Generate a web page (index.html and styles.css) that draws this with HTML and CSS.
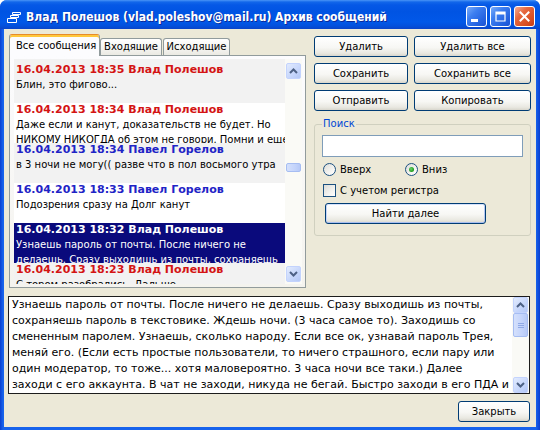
FILE: index.html
```html
<!DOCTYPE html>
<html lang="ru">
<head>
<meta charset="utf-8">
<title>Архив сообщений</title>
<link rel="stylesheet" href="styles.css">
</head>
<body>
<div class="window">
  <div class="titlebar">
    <svg class="app-icon" width="14" height="11" viewBox="0 0 14 11">
      <g fill="none" stroke="#fff" stroke-width="1">
        <path d="M5.5 0.5h8v2h-8z"/>
        <path d="M3.5 3.5h8v2h-8z"/>
        <path d="M0.5 6.5h9v4h-9z"/>
      </g>
    </svg>
    <span class="title">Влад Полешов (vlad.poleshov@mail.ru) Архив сообщений</span>
    <div class="caption">
      <div class="cbtn"><span class="min-glyph"></span></div>
      <div class="cbtn">
        <svg width="11" height="11" viewBox="0 0 11 11"><path d="M1 1h9v9h-9z" fill="none" stroke="#fff" stroke-width="1.2"/><path d="M1 1h9v2.5h-9z" fill="#fff"/></svg>
      </div>
      <div class="cbtn close">
        <svg width="11" height="11" viewBox="0 0 11 11"><path d="M1.5 1.5l8 8M9.5 1.5l-8 8" stroke="#fff" stroke-width="2" stroke-linecap="square"/></svg>
      </div>
    </div>
  </div>

  <div class="body">
    <div class="top">
      <div class="left">
        <div class="tabs">
          <div class="tab active">Все сообщения</div>
          <div class="tab t2">Входящие</div>
          <div class="tab t3">Исходящие</div>
        </div>
        <div class="panel">
          <div class="list">
            <div class="msgs">
              <div class="msg gray">
                <div class="hd red">16.04.2013 18:35 Влад Полешов</div>
                <div class="tx">Блин, это фигово...</div>
              </div>
              <div class="msg white">
                <div class="hd red">16.04.2013 18:34 Влад Полешов</div>
                <div class="tx">Даже если и канут, доказательств не будет. Но</div>
                <div class="tx">НИКОМУ НИКОГДА об этом не говори. Помни и еще</div>
              </div>
              <div class="msg gray">
                <div class="hd blue">16.04.2013 18:34 Павел Горелов</div>
                <div class="tx">в 3 ночи не могу(( разве что в пол восьмого утра</div>
              </div>
              <div class="msg white">
                <div class="hd blue">16.04.2013 18:33 Павел Горелов</div>
                <div class="tx">Подозрения сразу на Долг канут</div>
              </div>
              <div class="msg selected">
                <div class="hd">16.04.2013 18:32 Влад Полешов</div>
                <div class="tx">Узнаешь пароль от почты. После ничего не</div>
                <div class="tx">делаешь. Сразу выходишь из почты, сохраняешь</div>
              </div>
              <div class="msg gray">
                <div class="hd red">16.04.2013 18:23 Влад Полешов</div>
                <div class="tx">С тором разобрались. Дальше</div>
              </div>
            </div>
            <div class="vs list-vs">
              <div class="arrow"><svg width="9" height="6" viewBox="0 0 9 6"><path d="M1 5l3.5-3.5L8 5" fill="none" stroke="#4d6185" stroke-width="2"/></svg></div>
              <div class="track"><div class="thumb"></div></div>
              <div class="arrow"><svg width="9" height="6" viewBox="0 0 9 6"><path d="M1 1l3.5 3.5L8 1" fill="none" stroke="#4d6185" stroke-width="2"/></svg></div>
            </div>
          </div>
        </div>
      </div>

      <div class="right">
        <div class="btns">
          <button class="btn">Удалить</button>
          <button class="btn">Удалить все</button>
          <button class="btn">Сохранить</button>
          <button class="btn">Сохранить все</button>
          <button class="btn">Отправить</button>
          <button class="btn">Копировать</button>
        </div>
        <fieldset class="search">
          <legend>Поиск</legend>
          <div class="input"></div>
          <div class="radios">
            <div class="opt first"><span class="radio"></span><span class="lbl">Вверх</span></div>
            <div class="opt"><span class="radio checked"></span><span class="lbl">Вниз</span></div>
          </div>
          <div class="check-row"><span class="checkbox"></span><span class="lbl">С учетом регистра</span></div>
          <button class="btn find">Найти далее</button>
        </fieldset>
      </div>
    </div>

    <div class="textbox">
      <div class="text">
        <div>Узнаешь пароль от почты. После ничего не делаешь. Сразу выходишь из почты,</div>
        <div>сохраняешь пароль в текстовике. Ждешь ночи. (3 часа самое то). Заходишь со</div>
        <div>смененным паролем. Узнаешь, сколько народу. Если все ок, узнавай пароль Трея,</div>
        <div>меняй его. (Если есть простые пользователи, то ничего страшного, если пару или</div>
        <div>один модератор, то тоже... хотя маловероятно. 3 часа ночи все таки.) Далее</div>
        <div>заходи с его аккаунта. В чат не заходи, никуда не бегай. Быстро заходи в его ПДА и</div>
      </div>
      <div class="vs text-vs">
        <div class="arrow"><svg width="9" height="6" viewBox="0 0 9 6"><path d="M1 5l3.5-3.5L8 5" fill="none" stroke="#4d6185" stroke-width="2"/></svg></div>
        <div class="track"><div class="thumb big"><span></span><span></span><span></span></div></div>
        <div class="arrow"><svg width="9" height="6" viewBox="0 0 9 6"><path d="M1 1l3.5 3.5L8 1" fill="none" stroke="#4d6185" stroke-width="2"/></svg></div>
      </div>
    </div>

    <div class="footer">
      <button class="btn close-btn">Закрыть</button>
    </div>
  </div>
</div>
</body>
</html>
```
FILE: styles.css
```css
* { box-sizing: border-box; }
html, body { margin: 0; padding: 0; background: #ffffff; }

.window {
  width: 540px;
  height: 430px;
  display: flex;
  flex-direction: column;
  background: linear-gradient(90deg, #0a3fd0 0, #1763ec 3px, #1763ec 536px, #0a3fd0 540px);
  border-radius: 7px 7px 0 0;
  overflow: hidden;
  font-family: "DejaVu Sans", sans-serif;
  font-size: 10px;
  color: #000;
}

/* title bar */
.titlebar {
  flex: none;
  height: 29px;
  display: flex;
  align-items: center;
  padding: 4px 5px 0 7px;
  background: linear-gradient(180deg, #4a95f7 0, #1267ea 2px, #0558e6 5px, #0054e3 12px, #0158e8 22px, #0350dc 26px, #0a44c8 29px);
}
.app-icon { flex: none; margin-top: 1px; }
.title {
  margin-left: 5px;
  color: #fff;
  font-family: "DejaVu Sans Condensed", "DejaVu Sans", sans-serif;
  font-stretch: condensed;
  font-weight: bold;
  font-size: 12px;
  white-space: nowrap;
  text-shadow: 1px 1px 0 #0b2a9a;
}
.caption { margin-left: auto; display: flex; gap: 3px; }
.cbtn {
  width: 21px;
  height: 21px;
  border: 1px solid #fff;
  border-radius: 3px;
  background: linear-gradient(135deg, #79acf9 0, #3d7ef0 35%, #2462e0 75%, #1b52d3 100%);
  display: flex;
  align-items: center;
  justify-content: center;
  position: relative;
}
.cbtn.close { background: linear-gradient(135deg, #f3ad95 0, #e6683f 35%, #d94e22 75%, #c43c14 100%); }
.min-glyph { width: 7px; height: 3px; background: #fff; margin: 8px 5px 0 0; }

/* body */
.body {
  flex: 1;
  margin: 0 4px 4px;
  background: #ece9d8;
  padding: 5px 5px 5px 4px;
  display: flex;
  flex-direction: column;
}
.top { display: flex; gap: 8px; margin-left: 1px; height: 254px; }
.left { width: 297px; display: flex; flex-direction: column; }

.tabs { display: flex; align-items: flex-end; height: 21px; }
.tab {
  height: 17px;
  border: 1px solid #919b9c;
  border-bottom: none;
  border-radius: 3px 3px 0 0;
  background: linear-gradient(180deg, #ffffff 0, #f6f6f3 50%, #ebeae3 100%);
  text-align: center;
  line-height: 16px;
  white-space: nowrap;
}
.tab.active {
  width: 91px;
  height: 22px;
  margin-bottom: -1px;
  position: relative;
  z-index: 2;
  background: #fcfcfe;
  border-top: 1px solid #e68b2c;
  box-shadow: inset 0 2px 0 #ffc83c;
  text-align: left;
  padding-left: 6px;
  line-height: 21px;
}
.tab.t2 { width: 62px; }
.tab.t3 { width: 67px; margin-left: 1px; }

.panel {
  height: 233px;
  border: 1px solid #919b9c;
  background: linear-gradient(180deg, #fcfcfe 0, #f4f3ee 100%);
  padding: 3px 3px 3px 4px;
}
.list { height: 100%; display: flex; background: #f2f2f2; }
.msgs { flex: 1; overflow: hidden; padding-top: 4px; background: #f2f2f2; }
.msg { height: 40px; overflow: hidden; padding-left: 2px; white-space: nowrap; }
.msg.gray { background: #f2f2f2; }
.msg.white { background: #ffffff; }
.msg.selected { background: #0a0a7c; color: #fff; }
.hd { font-weight: bold; font-size: 11px; line-height: 14px; }
.hd.red { color: #d41414; }
.hd.blue { color: #1f24c6; }
.tx { font-size: 10px; line-height: 15px; }

/* scrollbars */
.vs { width: 17px; flex: none; display: flex; flex-direction: column; background: #fafaf6; }
.list-vs { padding: 4px 0 2px 0; }
.arrow {
  height: 16px;
  flex: none;
  margin: 0 1px;
  border: 1px solid #c3d3fd;
  border-radius: 2px;
  background: linear-gradient(135deg, #e2ebfe 0, #c6d6fb 60%, #b4c8f6 100%);
  display: flex;
  align-items: center;
  justify-content: center;
}
.track { flex: 1; }
.thumb {
  margin: 84px 1px 0;
  height: 9px;
  border: 1px solid #a6bdf2;
  border-radius: 2px;
  background: linear-gradient(90deg, #d4e0fc 0, #c4d4fb 60%, #b6c9f7 100%);
}
.thumb.big {
  margin-top: 0;
  height: 24px;
  display: flex;
  flex-direction: column;
  align-items: center;
  justify-content: center;
  gap: 1px;
}
.thumb.big span { width: 6px; height: 1px; background: #8fa9e6; }

/* right column */
.right { width: 217px; padding-top: 2px; display: flex; flex-direction: column; }
.btns { display: grid; grid-template-columns: 94px 117px; grid-auto-rows: 21px; gap: 6px; }
.btn {
  height: 21px;
  border: 1px solid #003c74;
  border-radius: 3px;
  background: linear-gradient(180deg, #ffffff 0, #f7f7f4 55%, #e9e8e1 85%, #d8d6cc 100%);
  font-family: "DejaVu Sans", sans-serif;
  font-size: 10px;
  color: #000;
  padding: 0;
  text-align: center;
}

.search {
  margin: 7px 0 0;
  border: 1px solid #d0d0bf;
  border-radius: 3px;
  padding: 5px 7px 11px;
  min-width: 0;
}
.search legend {
  padding: 0 1px;
  color: #0046d5;
  font-size: 10px;
  line-height: 12px;
}
.input { height: 22px; border: 1px solid #7f9db9; background: #fff; }
.radios { display: flex; align-items: center; margin-top: 6px; height: 13px; }
.opt { display: flex; align-items: center; }
.opt.first { width: 82px; margin-left: 1px; }
.lbl { margin-left: 4px; line-height: 13px; white-space: nowrap; }
.radio {
  width: 13px;
  height: 13px;
  border: 1px solid #1c5180;
  border-radius: 50%;
  background: linear-gradient(135deg, #dcdcd7 0, #f4f4f1 60%, #ffffff 100%);
  display: flex;
  align-items: center;
  justify-content: center;
}
.radio.checked::after {
  content: "";
  width: 5px;
  height: 5px;
  border-radius: 50%;
  background: radial-gradient(circle at 40% 40%, #6fd26f 0, #21a121 60%, #1a7f1a 100%);
}
.check-row { display: flex; align-items: center; margin-top: 8px; margin-left: 1px; height: 13px; }
.checkbox {
  width: 13px;
  height: 13px;
  border: 1px solid #1c5180;
  background: linear-gradient(135deg, #dcdcd7 0, #f2f2ef 60%, #ffffff 100%);
}
.btn.find {
  display: block;
  margin: 6px 0 0 3px;
  width: 161px;
  box-shadow: inset 0 -1px 0 #a9bfef, inset 0 1px 0 #d6e2fb, inset 1px 0 0 #c5d5f8, inset -1px 0 0 #b5c8f2;
}

/* text box */
.textbox {
  margin: 8px 1px 0 0;
  height: 98px;
  border: 1px solid #1c1c1c;
  background: #fff;
  display: flex;
}
.text {
  flex: 1;
  overflow: hidden;
  padding-left: 3px;
  font-size: 11px;
  line-height: 16px;
  white-space: nowrap;
}
.text-vs { background: #fafaf6; }

.footer { margin-top: 7px; display: flex; justify-content: flex-end; }
.btn.close-btn { width: 72px; margin-right: 1px; }
```
